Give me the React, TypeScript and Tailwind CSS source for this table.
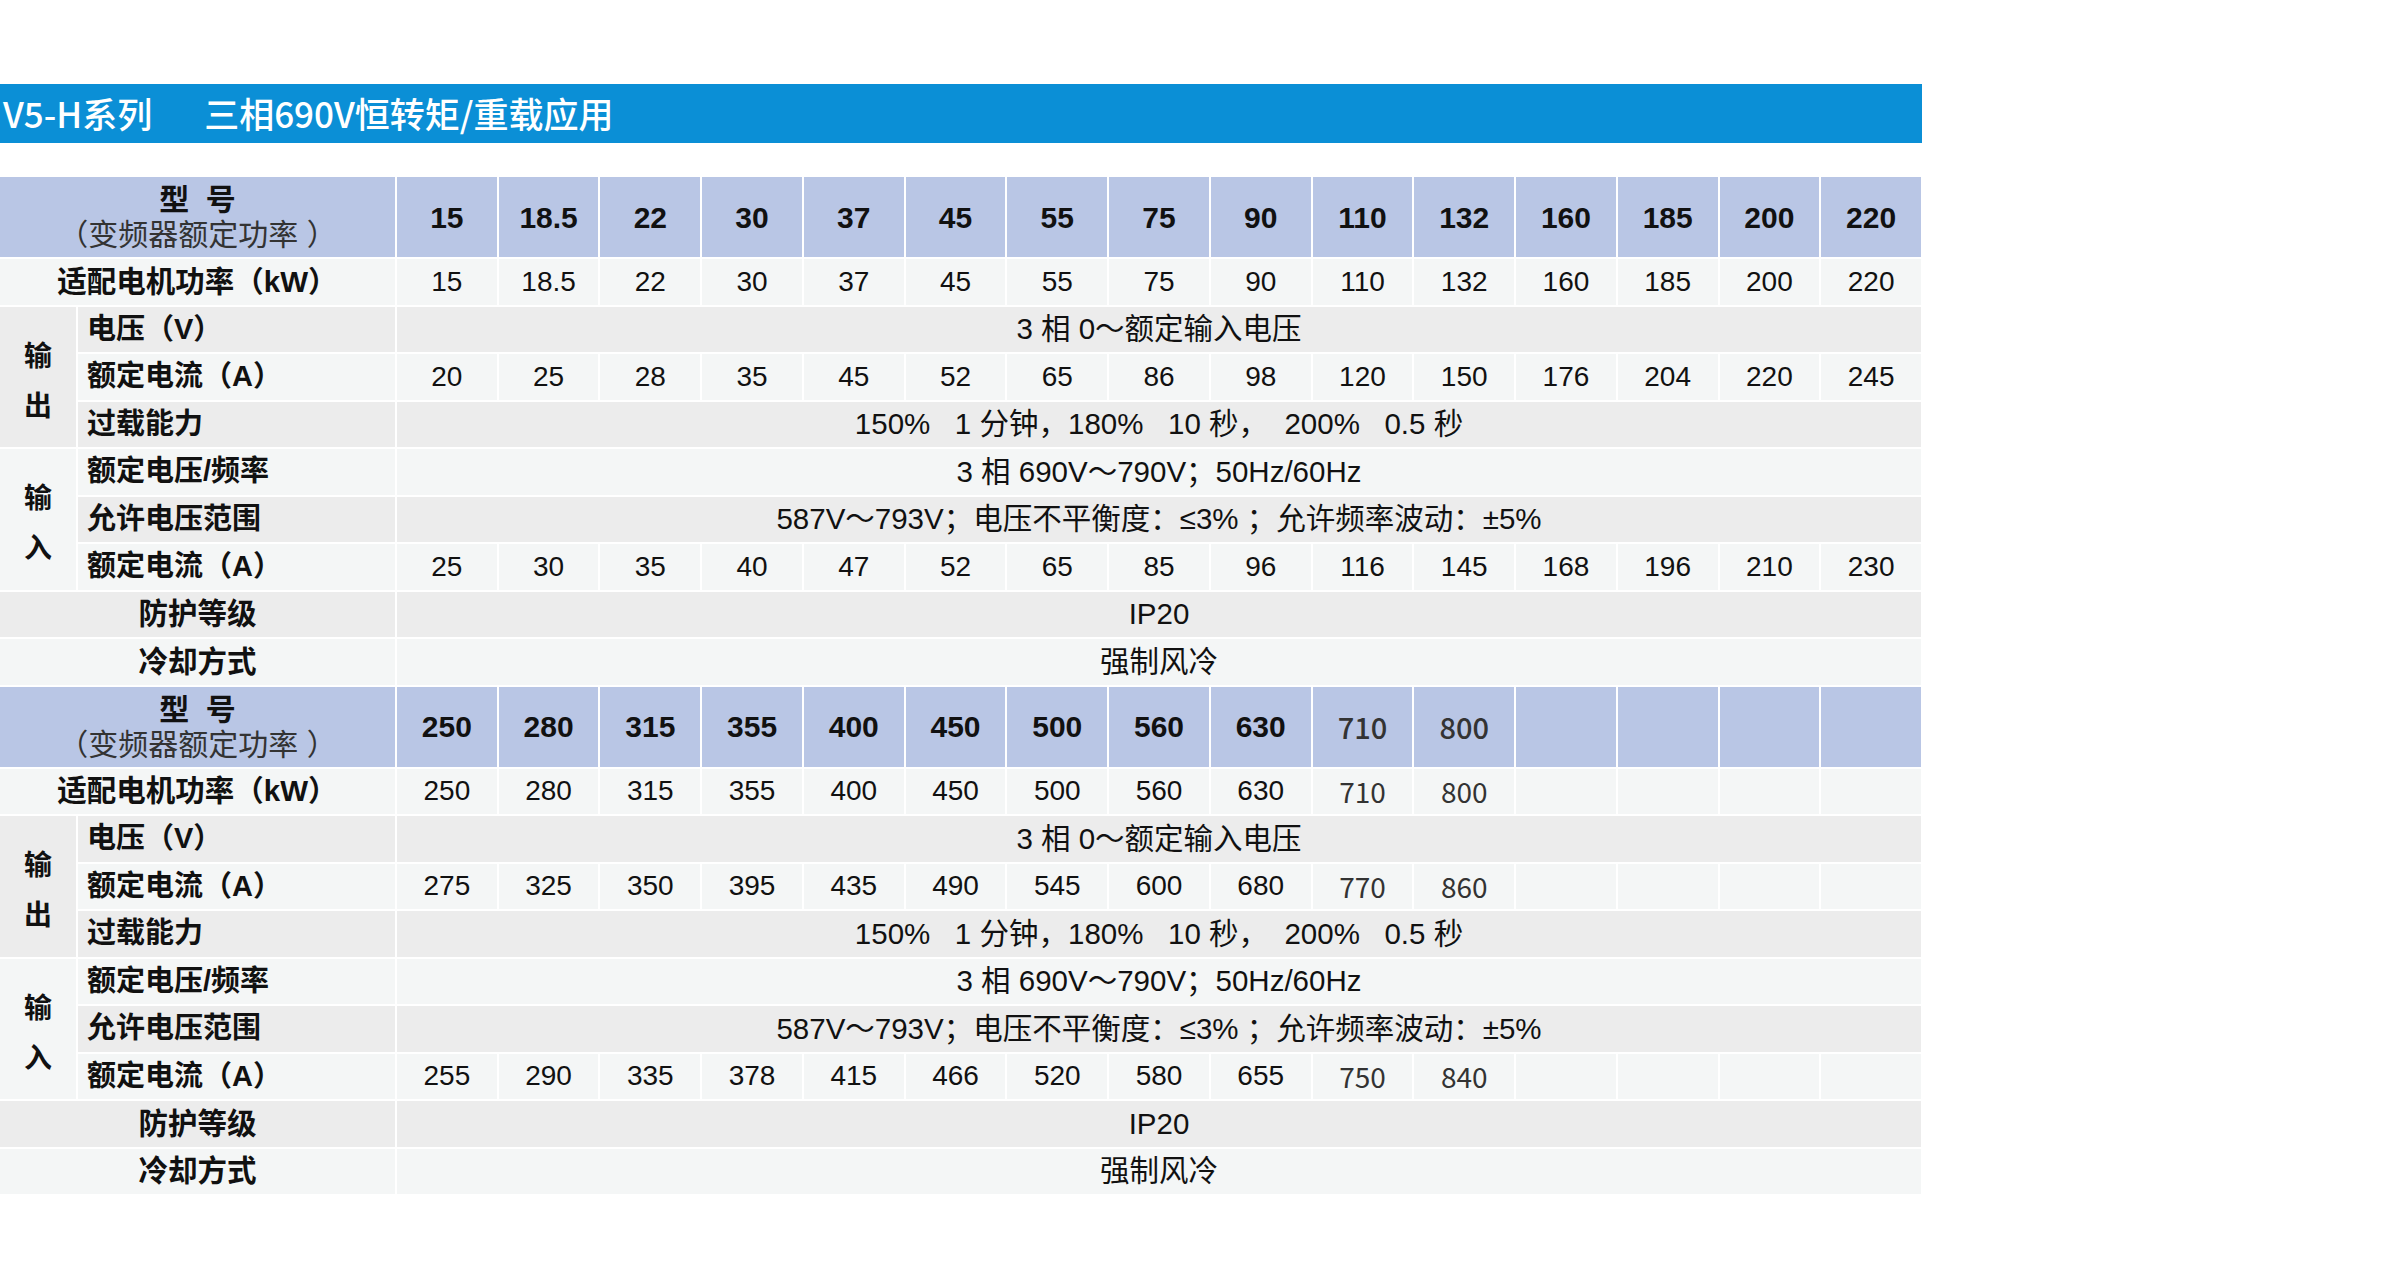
import React from 'react';

type Block = {
    models: string[];
    outCur: string[];
    inCur: string[];
    altFrom: number; // columns from here on use the lighter face (as in the source sheet)
};

const blocks: Block[] = [
    {
        models: ['15', '18.5', '22', '30', '37', '45', '55', '75', '90', '110', '132', '160', '185', '200', '220'],
        outCur: ['20', '25', '28', '35', '45', '52', '65', '86', '98', '120', '150', '176', '204', '220', '245'],
        inCur: ['25', '30', '35', '40', '47', '52', '65', '85', '96', '116', '145', '168', '196', '210', '230'],
        altFrom: 99,
    },
    {
        models: ['250', '280', '315', '355', '400', '450', '500', '560', '630', '710', '800', '', '', '', ''],
        outCur: ['275', '325', '350', '395', '435', '490', '545', '600', '680', '770', '860', '', '', '', ''],
        inCur: ['255', '290', '335', '378', '415', '466', '520', '580', '655', '750', '840', '', '', '', ''],
        altFrom: 9,
    },
];

const HEAD = 'bg-[#b9c6e5]';
const LIGHT = 'bg-[#f4f6f6]';
const GRAY = 'bg-[#ececec]';

const latin = "font-['Liberation_Sans','Noto_Sans_CJK_SC',sans-serif]";
const cjk = "font-['Noto_Sans_CJK_SC',sans-serif]";

const NumRow = ({ values, bg, head, altFrom }: { values: string[]; bg: string; head?: boolean; altFrom: number }) => (
    <>
        {values.map((v, i) => {
            const alt = i >= altFrom;
            return (
                <div
                    key={i}
                    className={`${bg} flex items-center justify-center ${alt ? `${cjk} text-[#333333]` : `${latin} text-[#111111]`} ${
                        head ? (alt ? 'text-[29px] font-medium' : 'text-[30px] font-bold') : 'text-[28px]'
                    }`}
                >
                    {v}
                </div>
            );
        })}
    </>
);

const SpanValue = ({ text, bg }: { text: string; bg: string }) => (
    <div className={`${bg} col-span-15 flex items-center justify-center whitespace-pre ${latin} text-[29.5px] text-[#111111]`}>
        {text}
    </div>
);

const SubLabel = ({ text, bg }: { text: string; bg: string }) => (
    <div className={`${bg} col-start-2 flex items-center pl-[9px] ${latin} font-bold text-[29px] text-[#111111]`}>{text}</div>
);

const WideLabel = ({ text, bg }: { text: string; bg: string }) => (
    <div className={`${bg} col-span-2 flex items-center justify-center ${latin} font-bold text-[29.5px] text-[#111111]`}>{text}</div>
);

const Group = ({ chars, bg }: { chars: string[]; bg: string }) => (
    <div className={`${bg} row-span-3 flex flex-col items-center justify-center gap-[20px] pt-[10px] ${latin} font-bold text-[28px] leading-[30px] text-[#111111]`}>
        {chars.map(c => (
            <span key={c}>{c}</span>
        ))}
    </div>
);

const SpecBlock = ({ block }: { block: Block }) => (
    <div className="grid w-[1921px] grid-cols-[76px_317px_repeat(15,minmax(0,1fr))] grid-rows-[80px_repeat(9,45.5px)] gap-[2px] bg-white">
        {/* header */}
        <div className={`${HEAD} col-span-2 flex flex-col items-center justify-center ${latin} text-[30px] leading-[35px]`}>
            <span className="font-bold text-[#111111] whitespace-pre">型  号</span>
            <span className="text-[#333333] whitespace-pre">（变频器额定功率 ）</span>
        </div>
        <NumRow values={block.models} bg={HEAD} head altFrom={block.altFrom} />

        <WideLabel text="适配电机功率（kW）" bg={LIGHT} />
        <NumRow values={block.models} bg={LIGHT} altFrom={block.altFrom} />

        {/* output */}
        <Group chars={['输', '出']} bg={GRAY} />
        <SubLabel text="电压（V）" bg={GRAY} />
        <SpanValue text="3 相 0～额定输入电压" bg={GRAY} />
        <SubLabel text="额定电流（A）" bg={LIGHT} />
        <NumRow values={block.outCur} bg={LIGHT} altFrom={block.altFrom} />
        <SubLabel text="过载能力" bg={GRAY} />
        <SpanValue text="150%   1 分钟，180%   10 秒，  200%   0.5 秒" bg={GRAY} />

        {/* input */}
        <Group chars={['输', '入']} bg={LIGHT} />
        <SubLabel text="额定电压/频率" bg={LIGHT} />
        <SpanValue text="3 相 690V～790V；50Hz/60Hz" bg={LIGHT} />
        <SubLabel text="允许电压范围" bg={GRAY} />
        <SpanValue text="587V～793V；电压不平衡度：≤3% ；允许频率波动：±5%" bg={GRAY} />
        <SubLabel text="额定电流（A）" bg={LIGHT} />
        <NumRow values={block.inCur} bg={LIGHT} altFrom={block.altFrom} />

        <WideLabel text="防护等级" bg={GRAY} />
        <SpanValue text="IP20" bg={GRAY} />
        <WideLabel text="冷却方式" bg={LIGHT} />
        <SpanValue text="强制风冷" bg={LIGHT} />
    </div>
);

export default function App() {
    return (
        <div className="h-[1279px] w-[2400px] overflow-hidden bg-white pt-[84px]">
            <div className={`flex h-[59px] w-[1922px] items-center bg-[#0b8fd6] pl-[3px] ${cjk} text-[35px] font-medium text-white`}>
                <span>V5-H系列</span>
                <span className="ml-[52px]">三相690V恒转矩/重载应用</span>
            </div>
            <div className="mt-[34px] flex flex-col gap-[2px]">
                {blocks.map((b, i) => (
                    <SpecBlock key={i} block={b} />
                ))}
            </div>
        </div>
    );
}
